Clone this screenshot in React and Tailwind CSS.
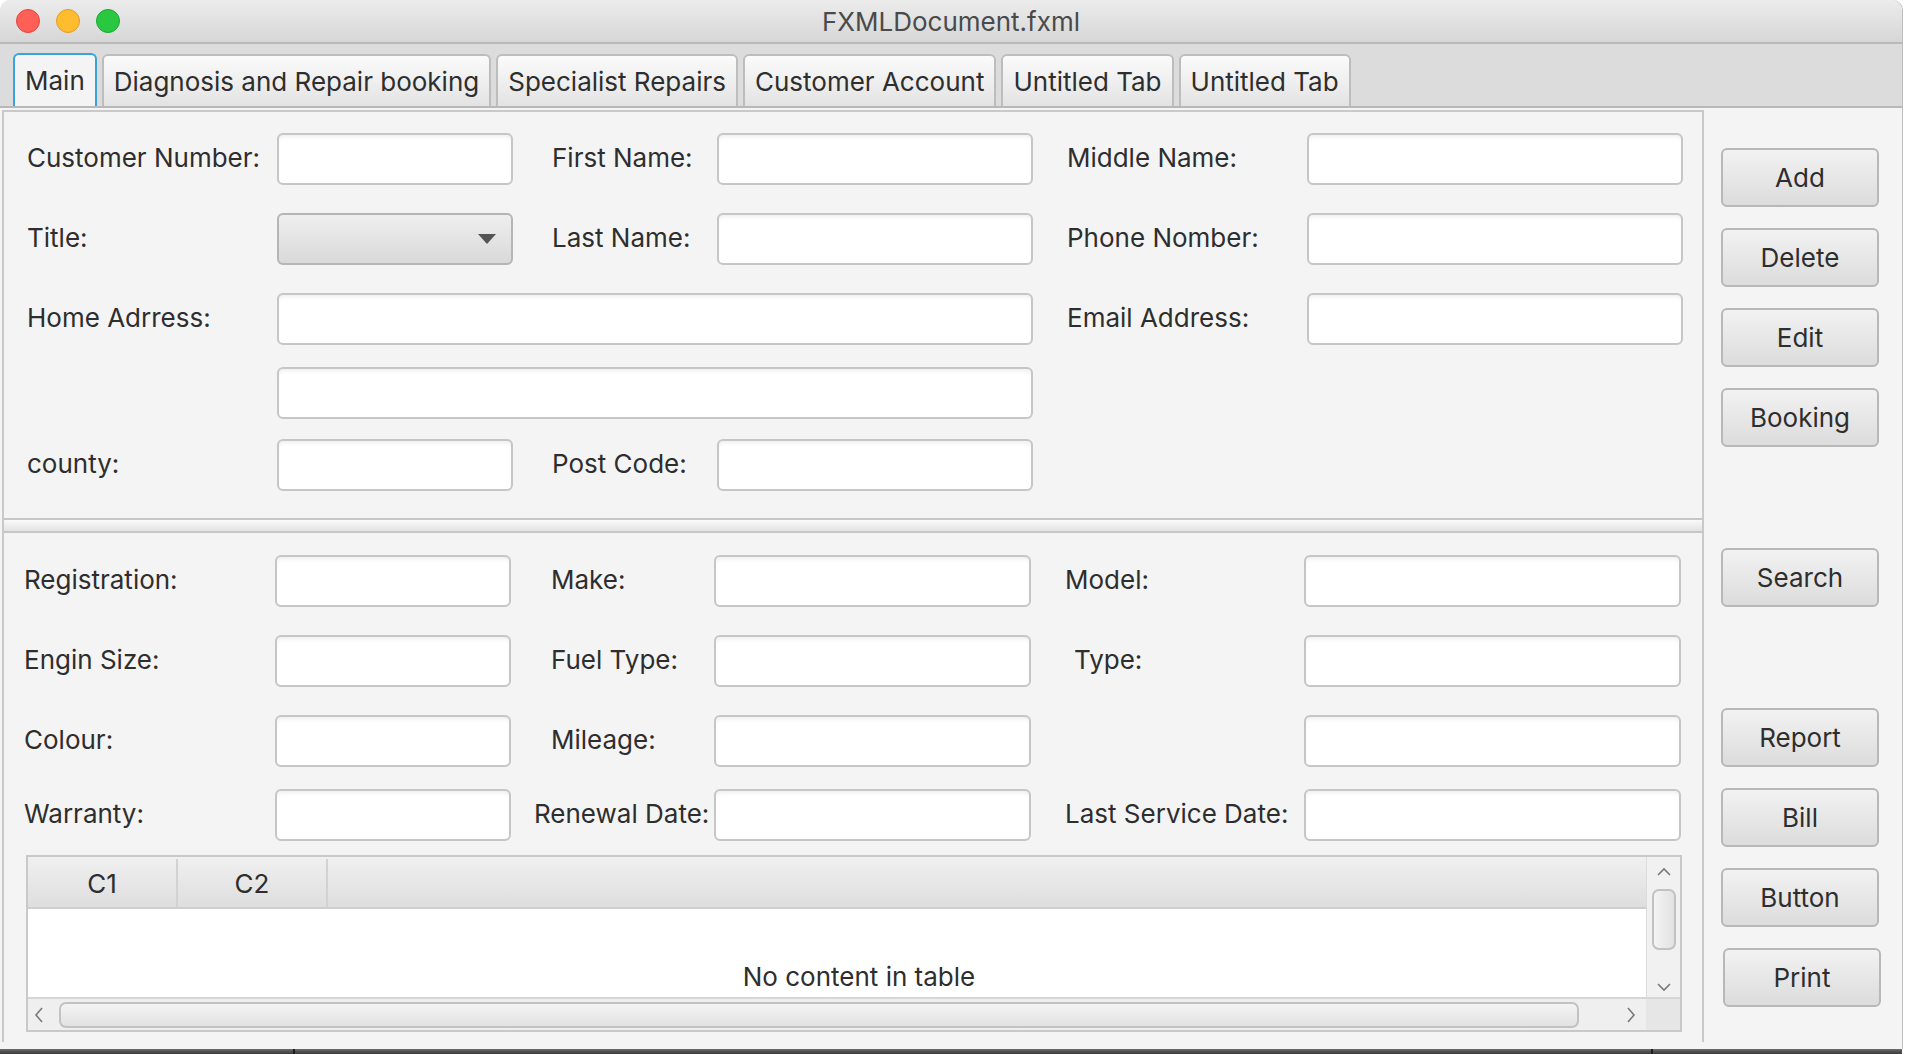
import React from 'react';

const Field = ({ className = '' }) => (
  <div className={`h-[52px] rounded-[6px] border-2 border-[#c6c6c6] bg-white shadow-[inset_0_4px_4px_-2px_rgba(0,0,0,0.07)] ${className}`} />
);

const Label = ({ children, className = '' }) => (
  <div className={`flex h-[52px] items-center whitespace-nowrap pb-[4px] text-[26px] text-[#2e2e2e] ${className}`}>{children}</div>
);

const Combo = () => (
  <div className="flex h-[52px] items-center justify-end rounded-[6px] border-2 border-[#b5b5b5] bg-gradient-to-b from-[#efefef] to-[#d9d9d9] pr-[15px]">
    <svg width="18" height="10" viewBox="0 0 18 10">
      <polygon points="0,0 18,0 9,10" fill="#555" />
    </svg>
  </div>
);

const Btn = ({ children, className = '' }) => (
  <button className={`flex h-[59px] w-[158px] items-center justify-center rounded-[6px] border-2 border-[#b8b8b8] bg-gradient-to-b from-[#f2f2f2] to-[#dcdcdc] text-[26px] text-[#2e2e2e] ${className}`}>
    {children}
  </button>
);

const Tab = ({ children, active }) =>
  active ? (
    <div className="flex h-[53px] items-center rounded-t-[6px] border-2 border-b-0 border-[#3aa3da] bg-[#f4f4f4] px-[10px] text-[26px] text-[#2e2e2e]">
      {children}
    </div>
  ) : (
    <div className="flex h-[52px] items-center rounded-t-[6px] border-2 border-b-0 border-[#bdbdbd] bg-gradient-to-b from-[#fbfbfb] to-[#e3e3e3] px-[10px] text-[26px] text-[#2e2e2e]">
      {children}
    </div>
  );

const Chevron = ({ dir }) => {
  const pts = {
    up: '1,8 7,2 13,8',
    down: '1,2 7,8 13,2',
    left: '8,1 2,8 8,15',
    right: '2,1 8,8 2,15',
  }[dir];
  const vertical = dir === 'up' || dir === 'down';
  return (
    <svg width={vertical ? 14 : 10} height={vertical ? 10 : 16} viewBox={vertical ? '0 0 14 10' : '0 0 10 16'}>
      <polyline points={pts} fill="none" stroke="#7a7a7a" strokeWidth="1.6" />
    </svg>
  );
};

export default function App() {
  return (
    <div className="flex h-[1054px] w-[1908px] flex-col overflow-hidden bg-white font-[Inter,Roboto,sans-serif]">
      <div className="flex h-[1049px] w-[1902px] flex-col overflow-hidden rounded-t-[10px] bg-[#f4f4f4] shadow-[1px_0_0_#bdbdbd]">
        {/* title bar */}
        <div className="grid h-[44px] shrink-0 grid-cols-[1fr_auto_1fr] items-center border-b-2 border-[#b9b9b9] bg-gradient-to-b from-[#ececec] to-[#d7d7d7]">
          <div className="flex items-center gap-[16px] pl-[16px]">
            <span className="h-[24px] w-[24px] rounded-full border border-[#e2463f] bg-[#fe5f57]" />
            <span className="h-[24px] w-[24px] rounded-full border border-[#df9f25] bg-[#febc2e]" />
            <span className="h-[24px] w-[24px] rounded-full border border-[#1ea533] bg-[#2ac840]" />
          </div>
          <div className="text-[26px] text-[#4a4a4a]">FXMLDocument.fxml</div>
          <div />
        </div>

        {/* tabs */}
        <div className="flex h-[64px] shrink-0 items-end gap-[5px] border-b-2 border-[#b8b8b8] bg-[#dcdcdc] pl-[13px]">
          <Tab active>Main</Tab>
          <Tab>Diagnosis and Repair booking</Tab>
          <Tab>Specialist Repairs</Tab>
          <Tab>Customer Account</Tab>
          <Tab>Untitled Tab</Tab>
          <Tab>Untitled Tab</Tab>
        </div>

        {/* content */}
        <div className="flex flex-1">
          <div className="ml-[2px] mt-[2px] flex h-[932px] w-[1702px] flex-col border-x-2 border-t-2 border-[#c9c9c9]">
            {/* customer section */}
            <div className="flex flex-col pt-[21px]">
              <div className="grid grid-cols-[250px_236px_204px_316px_274px_376px] pl-[23px]">
                <Label>Customer Number:</Label>
                <Field />
                <Label className="pl-[39px]">First Name:</Label>
                <Field />
                <Label className="pl-[34px]">Middle Name:</Label>
                <Field />
              </div>
              <div className="mt-[28px] grid grid-cols-[250px_236px_204px_316px_274px_376px] pl-[23px]">
                <Label>Title:</Label>
                <Combo />
                <Label className="pl-[39px]">Last Name:</Label>
                <Field />
                <Label className="pl-[34px]">Phone Nomber:</Label>
                <Field />
              </div>
              <div className="mt-[28px] grid grid-cols-[250px_236px_204px_316px_274px_376px] pl-[23px]">
                <Label>Home Adrress:</Label>
                <Field className="col-span-3" />
                <Label className="pl-[34px]">Email Address:</Label>
                <Field />
              </div>
              <div className="mt-[22px] grid grid-cols-[250px_236px_204px_316px_274px_376px] pl-[23px]">
                <div />
                <Field className="col-span-3" />
              </div>
              <div className="mt-[20px] grid grid-cols-[250px_236px_204px_316px_274px_376px] pl-[23px]">
                <Label>county:</Label>
                <Field />
                <Label className="pl-[39px]">Post Code:</Label>
                <Field />
              </div>
            </div>

            {/* split divider */}
            <div className="mt-[27px] h-[15px] border-y-2 border-[#c6c6c6] bg-gradient-to-b from-[#fafafa] to-[#e3e3e3]" />

            {/* vehicle section */}
            <div className="flex flex-1 flex-col pt-[22px]">
              <div className="grid grid-cols-[251px_236px_203px_317px_273px_377px] pl-[20px]">
                <Label>Registration:</Label>
                <Field />
                <Label className="pl-[40px]">Make:</Label>
                <Field />
                <Label className="pl-[34px]">Model:</Label>
                <Field />
              </div>
              <div className="mt-[28px] grid grid-cols-[251px_236px_203px_317px_273px_377px] pl-[20px]">
                <Label>Engin Size:</Label>
                <Field />
                <Label className="pl-[40px]">Fuel Type:</Label>
                <Field />
                <Label className="pl-[43px]">Type:</Label>
                <Field />
              </div>
              <div className="mt-[28px] grid grid-cols-[251px_236px_203px_317px_273px_377px] pl-[20px]">
                <Label>Colour:</Label>
                <Field />
                <Label className="pl-[40px]">Mileage:</Label>
                <Field />
                <div />
                <Field />
              </div>
              <div className="mt-[22px] grid grid-cols-[251px_236px_203px_317px_273px_377px] pl-[20px]">
                <Label>Warranty:</Label>
                <Field />
                <Label className="pl-[23px]">Renewal Date:</Label>
                <Field />
                <Label className="pl-[34px]">Last Service Date:</Label>
                <Field />
              </div>

              {/* table */}
              <div className="ml-[22px] mt-[14px] flex h-[177px] w-[1656px] flex-col border-2 border-[#c9c9c9] bg-white">
                <div className="flex flex-1">
                  <div className="flex flex-1 flex-col">
                    <div className="flex h-[52px] border-b-2 border-[#cfcfcf] bg-gradient-to-b from-[#f0f0f0] to-[#dedede] pt-[2px]">
                      <div className="flex w-[150px] items-center justify-center border-r-2 border-[#d2d2d2] text-[26px] text-[#2e2e2e]">C1</div>
                      <div className="flex w-[150px] items-center justify-center border-r-2 border-[#d2d2d2] text-[26px] text-[#2e2e2e]">C2</div>
                      <div className="flex-1" />
                    </div>
                    <div className="flex flex-1 justify-center pl-[44px] pt-[55px] text-[26px] leading-none text-[#2e2e2e]">
                      No content in table
                    </div>
                  </div>
                  <div className="flex w-[34px] flex-col items-center border-l border-[#dcdcdc] bg-[#f1f1f1] pt-[10px]">
                    <Chevron dir="up" />
                    <div className="mt-[12px] h-[61px] w-[24px] rounded-[7px] border-2 border-[#c2c2c2] bg-gradient-to-r from-[#f4f4f4] to-[#e2e2e2]" />
                    <div className="mt-[32px]">
                      <Chevron dir="down" />
                    </div>
                  </div>
                </div>
                <div className="flex h-[33px] border-t-2 border-[#d6d6d6]">
                  <div className="flex flex-1 items-center bg-[#efefef] pl-[6px] pr-[10px]">
                    <Chevron dir="left" />
                    <div className="ml-[15px] h-[26px] w-[1520px] rounded-[7px] border-2 border-[#c2c2c2] bg-gradient-to-b from-[#f4f4f4] to-[#e2e2e2]" />
                    <div className="ml-auto">
                      <Chevron dir="right" />
                    </div>
                  </div>
                  <div className="w-[34px] bg-[#e6e6e6]" />
                </div>
              </div>
            </div>
          </div>

          {/* button column */}
          <div className="flex flex-1 flex-col pl-[17px] pt-[40px]">
            <Btn>Add</Btn>
            <Btn className="mt-[21px]">Delete</Btn>
            <Btn className="mt-[21px]">Edit</Btn>
            <Btn className="mt-[21px]">Booking</Btn>
            <Btn className="mt-[101px]">Search</Btn>
            <Btn className="mt-[101px]">Report</Btn>
            <Btn className="mt-[21px]">Bill</Btn>
            <Btn className="mt-[21px]">Button</Btn>
            <Btn className="ml-[2px] mt-[21px]">Print</Btn>
          </div>
        </div>
      </div>

      {/* desktop strip below the window */}
      <div className="flex h-[5px] w-[1902px] bg-gradient-to-b from-[#6c6c6c] to-[#3a3a3a]">
        <div className="w-[295px] border-r-2 border-[#1e1e1e]" />
        <div className="w-[1358px] border-r-2 border-[#1e1e1e]" />
      </div>
    </div>
  );
}
